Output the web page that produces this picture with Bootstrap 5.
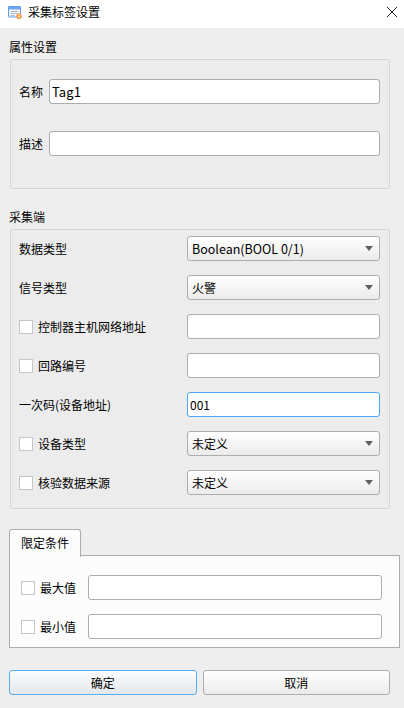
<!DOCTYPE html>
<html lang="zh-CN">
<head>
<meta charset="utf-8">
<title>采集标签设置</title>
<link href="https://cdn.jsdelivr.net/npm/bootstrap@5.3.0/dist/css/bootstrap.min.css" rel="stylesheet">
<style>
html, body { width: 404px; height: 708px; overflow: hidden; }
body { background: #eeeeee; color: #000; font: 12px/18px "Noto Sans CJK SC", "Noto Sans", sans-serif; }
.title-strip { height: 28px; background: #fff; padding: 0 6px 4px 8px; }
.title-text { margin-left: 5px; font-size: 12px; }
.close-x { width: 12px; height: 12px; display: block; }
.main-area { padding: 0 4px 0 9px; }
.sec-head { line-height: 18px; margin-bottom: 3px; }
.sec-head.first { margin-top: 10px; }
.sec-head.second { margin-top: 19px; }
.group-frame { margin: 0 10px 0 1px; height: 130px; background: #ececec; border: 1px solid #d5d5d5; border-radius: 2px; }
.frame-attr { height: 130px; padding: 19px 9px 0 8px; gap: 27px; }
.frame-acq { height: 280px; padding: 6px 9px 0 8px; gap: 14px; }
.field-row { height: 25px; }
.name-label { width: 30px; flex: none; }
.wide-label { width: 168px; flex: none; }
.form-control.qt-input, .form-select.qt-select { height: 25px; min-height: 25px; padding: 0 2px; font-size: 12px; line-height: 23px; color: #000; border: 1px solid #adadad; border-radius: 3px; box-shadow: none; }
.form-control.qt-input.latin-val { font-size: 13px; letter-spacing: .1px; }
.form-control.qt-input.focused { border-color: #4aa8f5; }
.form-select.qt-select {
  padding-left: 4px;
  background-color: #f4f4f4;
  background-image:
    url("data:image/svg+xml,%3Csvg xmlns='http://www.w3.org/2000/svg' width='8' height='5'%3E%3Cpath d='M0 0h8L4 5z' fill='%23606060'/%3E%3C/svg%3E"),
    linear-gradient(#ffffff, #ebebeb);
  background-position: right 6px center, 0 0;
  background-size: 8px 5px, 100% 100%;
  background-repeat: no-repeat;
}
.form-select.qt-select.latin-val { font-size: 12.5px; }
.form-check-input.qt-check { width: 14px; height: 14px; margin: 0 5px 0 0; flex: none; background-color: #fff; border: 1px solid #c6c6c6; border-radius: 0; }
.tab-wrap { margin-top: 20px; }
.nav-tabs.qt-tabs { border-bottom: 0; margin-bottom: -1px; position: relative; z-index: 1; }
.nav-tabs.qt-tabs .nav-link.active { width: 72px; height: 28px; padding: 0; font-size: 12px; line-height: 26px; text-align: center; color: #000; background: #fcfcfc; border: 1px solid #adadad; border-bottom: 0; border-radius: 3px 3px 0 0; }
.tab-body { height: 93px; background: #fcfcfc; border: 1px solid #adadad; padding: 19px 17px 0 11px; gap: 14px; }
.limit-label { width: 48px; flex: none; }
.btn-line { margin-top: 22px; margin-right: 10px; gap: 6px; }
.btn.qt-btn { flex: 1 1 0; height: 25px; padding: 0; font-size: 12px; line-height: 23px; color: #000; background: linear-gradient(#ffffff, #ebebeb); border: 1px solid #adadad; border-radius: 3px; }
.btn.qt-btn.primary-btn { background: linear-gradient(#fbfcfd, #e3e7eb); border-color: #55aef2; }
</style>
</head>
<body>
<div class="title-strip d-flex align-items-center">
  <svg width="15" height="15" viewBox="0 -1 15 15" aria-hidden="true">
    <rect x="0.5" y="0.5" width="12" height="10.5" rx="0.5" fill="#f6faff" stroke="#5a9bf0"/>
    <rect x="1" y="1" width="11" height="2.5" fill="#6fa8f2"/>
    <path d="M2.5 5.5h7M2.5 7.5h7M2.5 9.5h4" stroke="#a9b9cc" stroke-width="1" fill="none"/>
    <circle cx="11" cy="10.2" r="2.9" fill="#f7a35c"/>
    <circle cx="11" cy="10.2" r="1" fill="#fde3c8"/>
  </svg>
  <span class="title-text flex-grow-1">采集标签设置</span>
  <svg class="close-x" viewBox="0 0 12 12" aria-hidden="true"><path d="M1 1l10 10M11 1L1 11" stroke="#222" stroke-width="1" fill="none"/></svg>
</div>
<div class="main-area">
  <div class="sec-head first">属性设置</div>
  <div class="group-frame frame-attr d-flex flex-column">
    <div class="field-row d-flex align-items-center"><span class="name-label">名称</span><input class="form-control qt-input latin-val" value="Tag1"></div>
    <div class="field-row d-flex align-items-center"><span class="name-label">描述</span><input class="form-control qt-input"></div>
  </div>
  <div class="sec-head second">采集端</div>
  <div class="group-frame frame-acq d-flex flex-column">
    <div class="field-row d-flex align-items-center"><span class="wide-label">数据类型</span><select class="form-select qt-select latin-val"><option>Boolean(BOOL 0/1)</option></select></div>
    <div class="field-row d-flex align-items-center"><span class="wide-label">信号类型</span><select class="form-select qt-select"><option>火警</option></select></div>
    <div class="field-row d-flex align-items-center"><span class="wide-label d-flex align-items-center"><input class="form-check-input qt-check" type="checkbox">控制器主机网络地址</span><input class="form-control qt-input"></div>
    <div class="field-row d-flex align-items-center"><span class="wide-label d-flex align-items-center"><input class="form-check-input qt-check" type="checkbox">回路编号</span><input class="form-control qt-input"></div>
    <div class="field-row d-flex align-items-center"><span class="wide-label">一次码(设备地址)</span><input class="form-control qt-input focused" value="001"></div>
    <div class="field-row d-flex align-items-center"><span class="wide-label d-flex align-items-center"><input class="form-check-input qt-check" type="checkbox">设备类型</span><select class="form-select qt-select"><option>未定义</option></select></div>
    <div class="field-row d-flex align-items-center"><span class="wide-label d-flex align-items-center"><input class="form-check-input qt-check" type="checkbox">核验数据来源</span><select class="form-select qt-select"><option>未定义</option></select></div>
  </div>
  <div class="tab-wrap">
    <ul class="nav nav-tabs qt-tabs"><li class="nav-item"><a class="nav-link active" href="#">限定条件</a></li></ul>
    <div class="tab-body d-flex flex-column">
      <div class="field-row d-flex align-items-center"><input class="form-check-input qt-check" type="checkbox"><span class="limit-label">最大值</span><input class="form-control qt-input"></div>
      <div class="field-row d-flex align-items-center"><input class="form-check-input qt-check" type="checkbox"><span class="limit-label">最小值</span><input class="form-control qt-input"></div>
    </div>
  </div>
  <div class="btn-line d-flex">
    <button type="button" class="btn qt-btn primary-btn">确定</button>
    <button type="button" class="btn qt-btn">取消</button>
  </div>
</div>
<script src="https://cdn.jsdelivr.net/npm/bootstrap@5.3.0/dist/js/bootstrap.bundle.min.js"></script>
</body>
</html>
